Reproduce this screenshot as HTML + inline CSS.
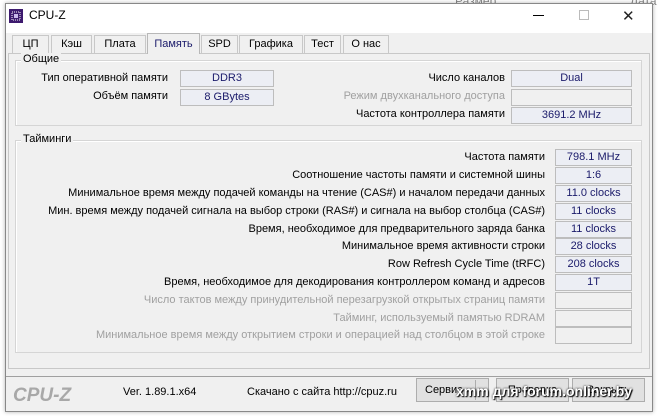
<!DOCTYPE html>
<html><head><meta charset="utf-8"><style>
*{margin:0;padding:0;box-sizing:border-box}
html,body{width:659px;height:416px;overflow:hidden}
body{background:#fff;font-family:"Liberation Sans","DejaVu Sans",sans-serif;font-size:11px;color:#000;position:relative}
.a{position:absolute;white-space:nowrap}
.win{position:absolute;left:5px;top:3px;width:648px;height:409px;background:#f0f0f0;border:1px solid #888;box-shadow:0 0 4px rgba(0,0,0,.3)}
.tb{position:absolute;left:0;top:0;width:646px;height:29px;background:#fff}
.grp{position:absolute;border:1px solid #d5d5d5;box-shadow:inset 1px 1px 0 #fff}
.gl{position:absolute;background:#f0f0f0;padding:0 2px;font-size:11px}
.lbl{position:absolute;text-align:right;white-space:nowrap;font-size:11px}
.box{position:absolute;border:1px solid #bdbdbd;background:#eceef4;text-align:center;color:#1a1a6a;font-size:11px;line-height:14px}
.dis{color:#a0a0a0}
.eb{background:#f0f0f0}
.tab{position:absolute;top:35px;height:18px;border:1px solid #c8c8c8;border-bottom:none;background:#f0f0f0;text-align:center;line-height:16px;font-size:11px}
.btn{position:absolute;top:378px;height:24px;border:1px solid #adadad;background:#e1e1e1;text-align:center;line-height:22px;font-size:11px}
</style></head><body>
<div class="a" style="left:630px;top:-6px;width:29px;overflow:hidden;color:#888;font-size:12px">Дата</div>
<div class="a" style="left:455px;top:-6px;color:#888;font-size:12px">Размер</div>
<div class="win">
<div class="tb"></div>
</div>
<svg class="a" style="left:9px;top:9px" width="14" height="14"><rect width="14" height="14" fill="#3d1a6e"/><rect x="3" y="3" width="8" height="8" fill="none" stroke="#fff" stroke-width="1" stroke-dasharray="1 1"/><rect x="5" y="5" width="4" height="4" fill="#c9b8ea"/></svg>
<div class="a" style="left:29px;top:8px;font-size:12px">CPU-Z</div>
<div class="a" style="left:533px;top:15px;width:11px;height:1px;background:#000"></div>
<div class="a" style="left:579px;top:10px;width:10px;height:10px;border:1px solid #bbb"></div>
<div class="a" style="left:622px;top:7px;font-size:15px;color:#222">✕</div>

<div class="a" style="left:8px;top:53px;width:642px;height:316px;border:1px solid #c8c8c8;background:#f0f0f0"></div>
<div class="tab" style="left:12px;width:37px">ЦП</div>
<div class="tab" style="left:51px;width:41px">Кэш</div>
<div class="tab" style="left:94px;width:52px">Плата</div>
<div class="tab" style="left:147px;top:33px;height:21px;width:53px;color:#1a1a6a;line-height:20px;border-color:#b8b8b8">Память</div>
<div class="tab" style="left:201px;width:37px">SPD</div>
<div class="tab" style="left:239px;width:64px">Графика</div>
<div class="tab" style="left:304px;width:37px">Тест</div>
<div class="tab" style="left:343px;width:46px">О нас</div>

<div class="grp" style="left:15px;top:60px;width:627px;height:66px"></div>
<div class="gl" style="left:21px;top:53px">Общие</div>
<div class="lbl" style="right:491px;top:72px">Тип оперативной памяти</div>
<div class="box" style="left:180px;top:70px;width:94px;height:17px">DDR3</div>
<div class="lbl" style="right:491px;top:90px">Объём памяти</div>
<div class="box" style="left:180px;top:89px;width:94px;height:17px">8 GBytes</div>
<div class="lbl" style="right:154px;top:72px">Число каналов</div>
<div class="box" style="left:511px;top:70px;width:121px;height:17px">Dual</div>
<div class="lbl dis" style="right:154px;top:90px">Режим двухканального доступа</div>
<div class="box eb" style="left:511px;top:89px;width:121px;height:17px"></div>
<div class="lbl" style="right:154px;top:108px">Частота контроллера памяти</div>
<div class="box" style="left:511px;top:107px;width:121px;height:17px">3691.2 MHz</div>

<div class="grp" style="left:15px;top:140px;width:627px;height:213px"></div>
<div class="gl" style="left:21px;top:133px">Тайминги</div>

<div class="lbl" style="right:114px;top:151px">Частота памяти</div><div class="box" style="left:555px;top:149px;width:77px;height:17px">798.1 MHz</div>
<div class="lbl" style="right:114px;top:169px">Соотношение частоты памяти и системной шины</div><div class="box" style="left:555px;top:167px;width:77px;height:17px">1:6</div>
<div class="lbl" style="right:114px;top:187px">Минимальное время между подачей команды на чтение (CAS#) и началом передачи данных</div><div class="box" style="left:555px;top:185px;width:77px;height:17px">11.0 clocks</div>
<div class="lbl" style="right:114px;top:205px">Мин. время между подачей сигнала на выбор строки (RAS#) и сигнала на выбор столбца (CAS#)</div><div class="box" style="left:555px;top:203px;width:77px;height:17px">11 clocks</div>
<div class="lbl" style="right:114px;top:223px">Время, необходимое для предварительного заряда банка</div><div class="box" style="left:555px;top:221px;width:77px;height:17px">11 clocks</div>
<div class="lbl" style="right:114px;top:240px">Минимальное время активности строки</div><div class="box" style="left:555px;top:238px;width:77px;height:17px">28 clocks</div>
<div class="lbl" style="right:114px;top:258px">Row Refresh Cycle Time (tRFC)</div><div class="box" style="left:555px;top:256px;width:77px;height:17px">208 clocks</div>
<div class="lbl" style="right:114px;top:276px">Время, необходимое для декодирования контроллером команд и адресов</div><div class="box" style="left:555px;top:274px;width:77px;height:17px">1T</div>
<div class="lbl dis" style="right:114px;top:294px">Число тактов между принудительной перезагрузкой открытых страниц памяти</div><div class="box eb" style="left:555px;top:292px;width:77px;height:17px"></div>
<div class="lbl dis" style="right:114px;top:312px">Тайминг, используемый памятью RDRAM</div><div class="box eb" style="left:555px;top:310px;width:77px;height:17px"></div>
<div class="lbl dis" style="right:114px;top:329px">Минимальное время между открытием строки и операцией над столбцом в этой строке</div><div class="box eb" style="left:555px;top:327px;width:77px;height:17px"></div>

<div class="a" style="left:6px;top:376px;width:646px;height:1px;background:#a0a0a0"></div>
<div class="a" style="left:13px;top:385px;font-size:19px;font-weight:bold;font-style:italic;color:#a8a8a8">CPU-Z</div>
<div class="a" style="left:123px;top:386px">Ver. 1.89.1.x64</div>
<div class="a" style="left:247px;top:386px">Скачано с сайта http://cpuz.ru</div>
<div class="btn" style="left:416px;width:73px;text-align:left;padding-left:8px">Сервис</div>
<div class="a" style="left:475px;top:380px;width:1px;height:20px;background:#adadad"></div>
<div class="btn" style="left:496px;width:73px">Проверка</div>
<div class="btn" style="left:572px;width:73px">Закрыть</div>
<div class="a" style="left:456px;top:383px;font-size:14px;font-weight:bold;color:#fff;text-shadow:1px 1px 1px #000,0 0 2px #000">xmm для forum.onliner.by</div>
</body></html>
